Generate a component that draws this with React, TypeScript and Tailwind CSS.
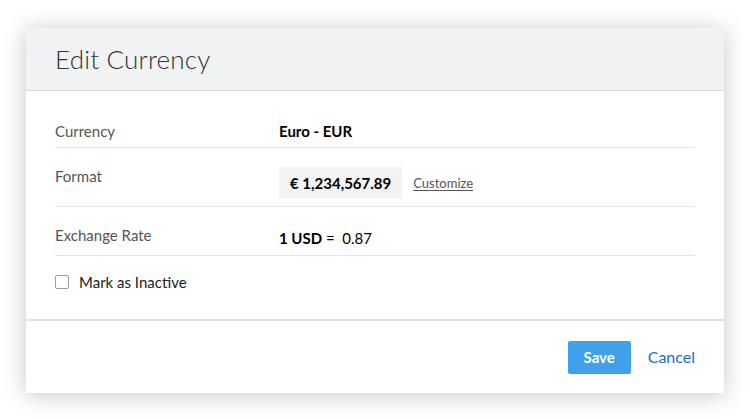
export default function App() {
  return (
    <div className="h-[418px] w-[750px] overflow-hidden bg-white pl-[26px] pt-[28px] font-['Lato',sans-serif]">
      <div className="flex w-[698px] flex-col bg-white shadow-[0_2px_22px_rgba(0,0,0,0.22)]">
        <div className="flex h-[63px] items-center border-b border-[#d6d7d8] bg-[#f1f2f3] px-[29px]">
          <h1 className="text-[26px] font-light tracking-[0.2px] text-[#333]">Edit Currency</h1>
        </div>

        <div className="px-[29px] pt-[20px]">
          <div className="flex border-b border-[#e6e6e6] pb-[6px] pt-[10px] text-[15px] leading-[20px]">
            <div className="w-[224px] text-[#555]">Currency</div>
            <div className="font-bold text-black">Euro - EUR</div>
          </div>

          <div className="flex items-start border-b border-[#e6e6e6] pb-[7px] pt-[19px] text-[15px]">
            <div className="-mt-[1px] w-[224px] leading-[20px] text-[#555]">Format</div>
            <div className="flex items-center">
              <span className="flex h-[32px] items-center bg-[#f3f3f3] px-[11px] text-[15px] font-bold text-black">
                € 1,234,567.89
              </span>
              <a className="ml-[11px] mt-[2px] text-[13px] text-[#555] underline underline-offset-2">Customize</a>
            </div>
          </div>

          <div className="flex items-start border-b border-[#e6e6e6] pb-[10px] pt-[18px] text-[15px] leading-[20px]">
            <div className="w-[224px] text-[#555]">Exchange Rate</div>
            <div className="relative top-[3px] text-black">
              <span className="font-bold">1 USD</span> = &nbsp;0.87
            </div>
          </div>

          <label className="flex items-center gap-[10px] pb-[30px] pt-[19px]">
            <span className="h-[14px] w-[14px] rounded-[2px] border border-[#9a9a9a] bg-white" />
            <span className="text-[15px] leading-[14px] text-[#222]">Mark as Inactive</span>
          </label>
        </div>

        <div className="flex h-[74px] items-center justify-end gap-[17px] border-t-2 border-[#e4e4e4] px-[29px]">
          <button className="h-[33px] w-[63px] rounded-[2px] bg-[#40a0ea] text-[15px] font-bold text-white">
            Save
          </button>
          <a className="text-[16px] text-[#1b6bd1]">Cancel</a>
        </div>
      </div>
    </div>
  );
}
